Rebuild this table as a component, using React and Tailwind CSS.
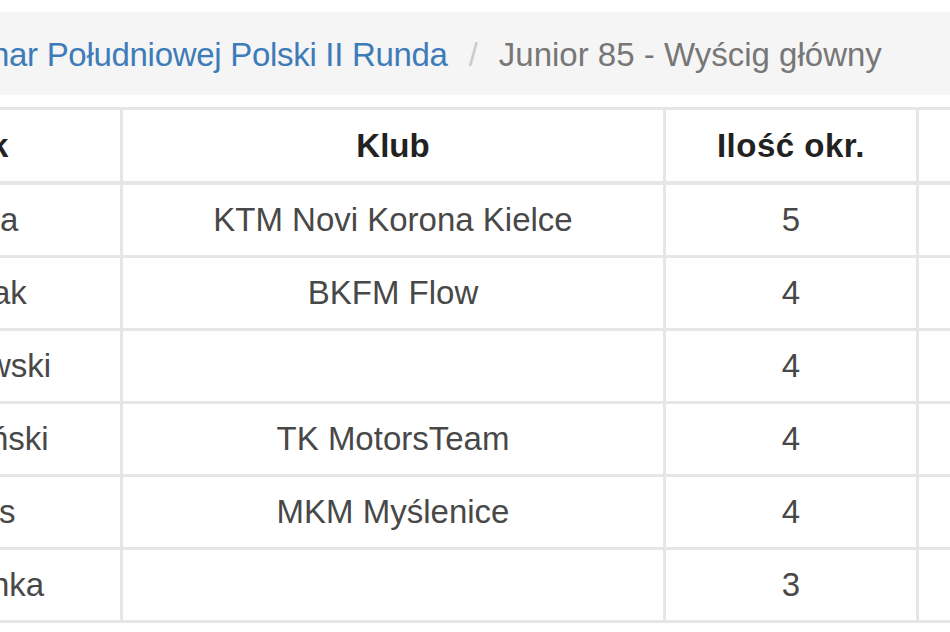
const rows = [
  { tail: 'a', shift: 'ml-[0px]', club: 'KTM Novi Korona Kielce', laps: '5' },
  { tail: 'ak', shift: 'ml-[-8px]', club: 'BKFM Flow', laps: '4' },
  { tail: 'wski', shift: 'ml-[-13px]', club: '', laps: '4' },
  { tail: 'ński', shift: 'ml-[-10px]', club: 'TK MotorsTeam', laps: '4' },
  { tail: 's', shift: 'ml-[-1px]', club: 'MKM Myślenice', laps: '4' },
  { tail: 'nka', shift: 'ml-[-9px]', club: '', laps: '3' },
]

export default function App() {
  return (
    <div className="w-[950px] h-[632px] overflow-hidden bg-white font-['Liberation_Sans',Arial,sans-serif] text-[33px] text-[#484848]">
      <nav className="mt-[12px] flex h-[83px] items-center whitespace-nowrap bg-[#f5f5f5] pt-[3px]">
        <span className="ml-[-9px] tracking-[-0.3px] text-[#3d7cb8]">har Południowej Polski II Runda</span>
        <span className="px-[21px] text-[#ccc]">/</span>
        <span className="text-[#777]">Junior 85 - Wyścig główny</span>
      </nav>

      <div className="mt-[12px] border-t-[3px] border-[#e6e6e6]">
        <div className="flex h-[75px] border-b-[4px] border-[#e6e6e6] font-bold text-[#222]">
          <div className="flex w-[123px] shrink-0 items-center overflow-hidden border-r-[3px] border-[#e6e6e6]">
            <span className="ml-[-10px]">k</span>
          </div>
          <div className="flex w-[543px] shrink-0 items-center justify-center border-r-[3px] border-[#e6e6e6]">
            Klub
          </div>
          <div className="flex w-[253px] shrink-0 items-center justify-center border-r-[3px] border-[#e6e6e6] tracking-[0.5px]">
            Ilość okr.
          </div>
          <div className="flex-1" />
        </div>

        {rows.map((r, i) => (
          <div key={i} className="flex h-[73px] border-b-[3px] border-[#e6e6e6]">
            <div className="flex w-[123px] shrink-0 items-center overflow-hidden whitespace-nowrap border-r-[3px] border-[#e6e6e6]">
              <span className={r.shift}>{r.tail}</span>
            </div>
            <div className="flex w-[543px] shrink-0 items-center justify-center border-r-[3px] border-[#e6e6e6]">
              {r.club}
            </div>
            <div className="flex w-[253px] shrink-0 items-center justify-center border-r-[3px] border-[#e6e6e6]">
              {r.laps}
            </div>
            <div className="flex-1" />
          </div>
        ))}
      </div>
    </div>
  )
}
